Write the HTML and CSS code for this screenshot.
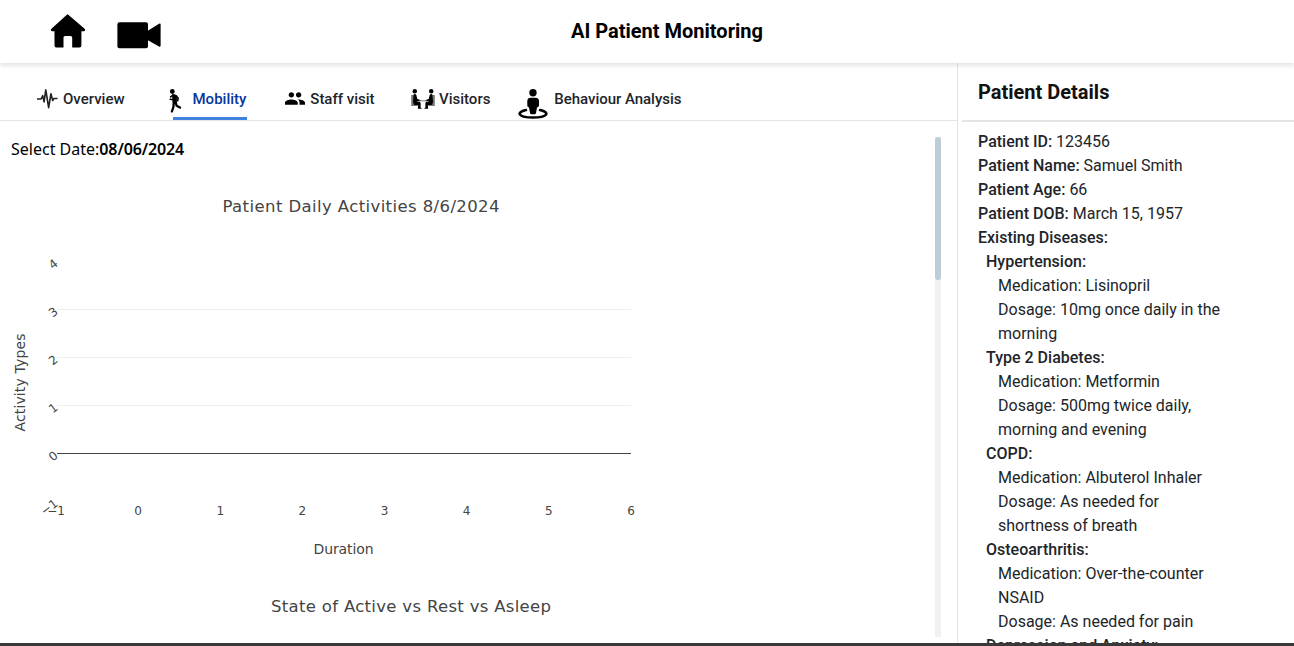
FILE: index.html
```html
<!DOCTYPE html>
<html lang="en">
<head>
<meta charset="utf-8">
<title>AI Patient Monitoring</title>
<link rel="stylesheet" href="styles.css">
</head>
<body>
<div class="app">
  <header class="header">
    <nav class="shortcuts">
      <svg class="home" viewBox="0 0 36 34"><path d="M18 .4 34.6 14.8Q36 16.6 34 17.2H31.4V31.5Q31.4 33.4 29.5 33.4H22.2V23.6Q22.2 22 20.6 22H15Q13.5 22 13.5 23.6V33.4H6.2Q4.5 33.4 4.5 31.5V17.2H2Q0 16.6 1.4 14.8L16.6 1Q17.6 0 18 .4Z"/></svg>
      <svg class="camera" viewBox="0 0 44 27"><rect x=".4" y=".3" width="30.6" height="26" rx="2"/><path d="M30.5 9 42 1.8Q43.6 1 43.6 2.6V23.6Q43.6 25.2 42 24.4L30.5 18Z"/></svg>
    </nav>
    <h1 class="title">AI Patient Monitoring</h1>
  </header>
  <div class="body">
    <main class="main">
      <nav class="tabs">
        <a class="tab overview"><svg class="icon" viewBox="0 0 22 22"><path class="stroke" d="M0 11H4.3L6 7.5 7.4 14 9.2 1.5 12.2 20 14.6 5.5 16.4 12.5 17.8 10.5H21.5"/></svg><span class="label">Overview</span></a>
        <a class="tab mobility active"><svg class="icon" viewBox="0 0 16 24"><circle cx="4.300" cy="2.500" r="2.400"/><path d="M4 5.300H7L9 7 8.800 13.500H4.600Z"/><path class="limb" d="M5 6.200 2.600 7.800M2.300 10.300 5 10.800M8.200 6.800 10.200 9.300 9.600 11.800"/><path class="leg" d="M7.600 13 8.600 16.800 12 18.600M5.800 13 5.400 18 3.900 22.500"/></svg><span class="label">Mobility</span></a>
        <a class="tab staff"><svg class="icon" viewBox="1 5 22 14"><path d="M16 11c1.66 0 2.99-1.34 2.99-3S17.66 5 16 5s-3 1.34-3 3 1.34 3 3 3zm-8 0c1.66 0 2.99-1.34 2.99-3S9.66 5 8 5 5 6.34 5 8s1.34 3 3 3zm0 2c-2.33 0-7 1.17-7 3.5V19h14v-2.5c0-2.330-4.67-3.500-7-3.500zm8 0c-.29 0-.62.02-.97.05 1.160.84 1.970 1.970 1.970 3.450V19h6v-2.500c0-2.330-4.670-3.500-7-3.500z"/></svg><span class="label">Staff visit</span></a>
        <a class="tab visitors"><svg class="icon" viewBox="0 0 24 21"><g><path class="chair" d="M1.200 6V16H7"/><circle cx="3.800" cy="2.200" r="2.200"/><path d="M2.300 6Q4 4 5.300 6L6.300 10 9.500 11 9.300 12.200 6.500 12V12.800H8.500Q9.800 13 9.700 15L9.500 18.200 11 19.800H6.800L7.200 16H3.500Q2 15.500 2 13Z"/></g><g transform="translate(24 0) scale(-1 1)"><path class="chair" d="M1.200 6V16H7"/><circle cx="3.800" cy="2.200" r="2.200"/><path d="M2.300 6Q4 4 5.300 6L6.300 10 9.500 11 9.300 12.200 6.500 12V12.800H8.500Q9.800 13 9.700 15L9.500 18.200 11 19.800H6.800L7.200 16H3.500Q2 15.500 2 13Z"/></g><path class="table" d="M8 11.800H16"/></svg><span class="label">Visitors</span></a>
        <a class="tab behaviour"><svg class="icon" viewBox="0 0 30 30"><circle cx="15" cy="3.700" r="3.700"/><path d="M12.500 8.800H17.500Q21 9 21 12V16.500Q21 18 19 18.500L18 24Q17.800 25.200 16.500 25.200H13.500Q12.200 25.200 12 24L11 18.500Q9.300 18 9.300 16.500V12Q9.300 9 12.500 8.800Z"/><path class="ring" d="M8 21C-3 23.500 1 28.600 15 28.600S33 23.500 22 21"/></svg><span class="label">Behaviour Analysis</span></a>
      </nav>
      <section class="content">
        <div class="scroll">
          <div class="date">Select Date:<b>08/06/2024</b></div>
          <svg class="chart" width="700" height="400" viewBox="0 162 700 400">
            <text class="chart-title" x="222.500" y="212" textLength="277">Patient Daily Activities 8/6/2024</text>
            <path class="grid" d="M57 309.500H631M57 357.500H631M57 405.500H631"/>
            <path class="zero" d="M57 453.500H631"/>
            <g class="tick yticks">
              <text transform="translate(56.300 261.800) rotate(-38)">4</text>
              <text transform="translate(56.300 309.800) rotate(-38)">3</text>
              <text transform="translate(56.300 357.800) rotate(-38)">2</text>
              <text transform="translate(56.300 405.800) rotate(-38)">1</text>
              <text transform="translate(56.300 453.800) rotate(-38)">0</text>
              <text transform="translate(56.300 501.800) rotate(-38)">−1</text>
            </g>
            <g class="tick xticks">
              <text x="56" y="515">−1</text><text x="138" y="515">0</text><text x="220.300" y="515">1</text><text x="302.400" y="515">2</text><text x="384.500" y="515">3</text><text x="466.600" y="515">4</text><text x="548.800" y="515">5</text><text x="631" y="515">6</text>
            </g>
            <text class="axis" x="313.500" y="554" textLength="60">Duration</text>
            <text class="axis" transform="translate(25 431.500) rotate(-90)" textLength="98">Activity Types</text>
          </svg>
          <svg class="chart" width="700" height="75" viewBox="0 562 700 75"><text class="chart-title" x="271" y="612" textLength="280">State of Active vs Rest vs Asleep</text></svg>
        </div>
        <div class="track"><div class="thumb"></div></div>
      </section>
    </main>
    <aside class="details">
      <h2 class="details-title">Patient Details</h2>
      <div class="info">
        <p><b>Patient ID:</b> 123456</p>
        <p><b>Patient Name:</b> Samuel Smith</p>
        <p><b>Patient Age:</b> 66</p>
        <p><b>Patient DOB:</b> March 15, 1957</p>
        <p><b>Existing Diseases:</b></p>
        <p class="disease"><b>Hypertension:</b></p>
        <p class="item">Medication: Lisinopril</p>
        <p class="item">Dosage: 10mg once daily in the morning</p>
        <p class="disease"><b>Type 2 Diabetes:</b></p>
        <p class="item">Medication: Metformin</p>
        <p class="item">Dosage: 500mg twice daily, morning and evening</p>
        <p class="disease"><b>COPD:</b></p>
        <p class="item">Medication: Albuterol Inhaler</p>
        <p class="item">Dosage: As needed for shortness of breath</p>
        <p class="disease"><b>Osteoarthritis:</b></p>
        <p class="item">Medication: Over-the-counter NSAID</p>
        <p class="item">Dosage: As needed for pain</p>
        <p class="disease"><b>Depression and Anxiety:</b></p>
      </div>
    </aside>
  </div>
  <footer class="bottom"></footer>
</div>
</body>
</html>
```
FILE: styles.css
```css
* { box-sizing: border-box; }
body { margin: 0; background: #fff; font-family: Roboto, sans-serif; color: #212529; }
h1, h2, p { margin: 0; }
b { font-weight: 500; }
svg { display: block; flex: none; }
.app { height: 646px; display: flex; flex-direction: column; overflow: hidden; }
.header { height: 63px; flex: none; display: grid; grid-template-columns: 571px 1fr; box-shadow: 0 3px 4px rgba(0,0,0,.1); z-index: 1; }
.shortcuts { display: flex; padding: 14px 0 0 49.500px; gap: 31.500px; }
.home { width: 36px; height: 34px; }
.camera { width: 44px; height: 27px; margin-top: 7.500px; }
.title { font-size: 20px; line-height: 24px; font-weight: 700; color: #000; padding-top: 19px; white-space: nowrap; }
.body { flex: 1; min-height: 0; display: flex; }
.main { width: 957px; display: flex; flex-direction: column; }
.tabs { height: 58px; flex: none; display: flex; padding-left: 36.500px; border-bottom: 1px solid #e3e4e6; }
.tab { display: flex; height: 57px; font-size: 15px; font-weight: 500; line-height: 20px; color: #212529; white-space: nowrap; }
.label { margin-top: 26px; }
.overview { width: 131px; }
.overview .icon { width: 21px; height: 22px; margin: 25px 5.500px 0 0; }
.mobility { width: 117.500px; }
.mobility .icon { width: 16px; height: 24px; margin: 26px 9px 0 0; }
.active { background: linear-gradient(#3f83df, #3f83df) 5.500px 54px / 74px 3px no-repeat; }
.active .label { color: #06379b; }
.staff { width: 126px; }
.staff .icon { width: 20px; height: 13px; margin: 29px 5.300px 0 0; }
.visitors { width: 107px; }
.visitors .icon { width: 24px; height: 21px; margin: 26px 4px 0 0; }
.behaviour .icon { width: 30px; height: 30px; margin: 26px 6.300px 0 0; }
.behaviour .label { letter-spacing: -.03px; }
.stroke { fill: none; stroke: #222; stroke-width: 1.700; stroke-linejoin: round; }
.limb { fill: none; stroke: #000; stroke-width: 1.600; stroke-linecap: round; stroke-linejoin: round; }
.leg { fill: none; stroke: #000; stroke-width: 2.300; stroke-linecap: round; stroke-linejoin: round; }
.chair { fill: none; stroke: #777; stroke-width: 2; }
.table { fill: none; stroke: #777; stroke-width: .9; }
.ring { fill: none; stroke: #000; stroke-width: 2.5; stroke-linecap: round; }
.content { flex: 1; min-height: 0; display: flex; padding-top: 16px; }
.scroll { width: 935px; overflow: hidden; }
.date { height: 25px; padding-left: 11px; font: 16px/24px "Noto Sans", sans-serif; color: #000; }
.date b { font-weight: 600; letter-spacing: -.12px; }
.chart { font-family: "DejaVu Sans", Verdana, sans-serif; fill: #444; }
.chart-title { font-size: 16.500px; }
.grid { stroke: #eee; }
.zero { stroke: #444; }
.tick { font-size: 12px; }
.yticks { text-anchor: end; }
.yticks text { dominant-baseline: central; }
.xticks { text-anchor: middle; }
.axis { font-size: 14px; }
.track { width: 6px; height: 500px; background: #f1f1f1; }
.thumb { height: 143px; border-radius: 3px; background: #bccdd5; }
.details { flex: 1; border-left: 1px solid #e3e4e6; padding-left: 4px; overflow: hidden; }
.details-title { height: 59px; padding: 17px 16px 0; font-size: 20px; line-height: 24px; font-weight: 700; color: #111; border-bottom: 2px solid #e3e4e6; }
.info { padding: 8px 70px 0 16px; font-size: 16px; line-height: 24px; }
.disease { padding-left: 8px; }
.item { padding-left: 20px; }
.bottom { height: 3px; flex: none; background: #3a3838; }
```
